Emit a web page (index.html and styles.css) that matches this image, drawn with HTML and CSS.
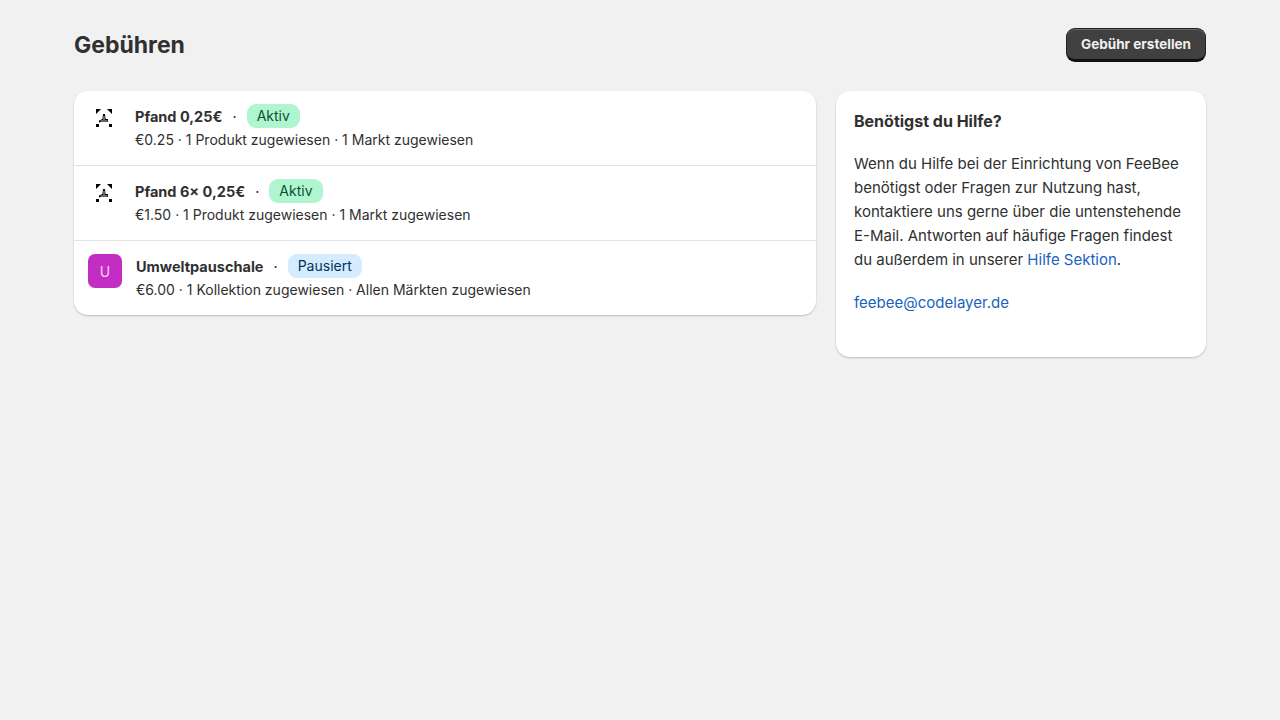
FILE: index.html
```html
<!DOCTYPE html>
<html lang="de">

<head>
  <meta charset="UTF-8" />
  <title>Gebühren</title>
  <link rel="stylesheet" href="styles.css">
</head>

<body>
  <div class="page">
    <header class="page-header">
      <h1>Gebühren</h1>
      <button class="create-btn">Gebühr erstellen</button>
    </header>

    <div class="columns">
      <ul class="card fee-list">
        <li class="fee-row">
          <svg class="fee-icon" viewBox="0 0 20 20">
            <path d="M2 1h5L2 6zM18 1h-5l5 5z" />
            <path d="M9 6h2l.6 5H14v3H7l-2 .6v-2L8.4 11z" />
            <path class="cut" d="M6.500 13h7M10 8v4" />
            <rect x="2" y="16" width="3" height="3" />
            <rect x="15" y="16" width="3" height="3" />
          </svg>
          <div class="fee-text">
            <div class="fee-title">
              <strong>Pfand 0,25€</strong><span class="dot">·</span><span class="badge active">Aktiv</span>
            </div>
            <p>€0.25 · 1 Produkt zugewiesen · 1 Markt zugewiesen</p>
          </div>
        </li>
        <li class="fee-row">
          <svg class="fee-icon" viewBox="0 0 20 20">
            <path d="M2 1h5L2 6zM18 1h-5l5 5z" />
            <path d="M9 6h2l.6 5H14v3H7l-2 .6v-2L8.4 11z" />
            <path class="cut" d="M6.500 13h7M10 8v4" />
            <rect x="2" y="16" width="3" height="3" />
            <rect x="15" y="16" width="3" height="3" />
          </svg>
          <div class="fee-text">
            <div class="fee-title">
              <strong>Pfand 6x 0,25€</strong><span class="dot">·</span><span class="badge active">Aktiv</span>
            </div>
            <p>€1.50 · 1 Produkt zugewiesen · 1 Markt zugewiesen</p>
          </div>
        </li>
        <li class="fee-row">
          <div class="fee-avatar">U</div>
          <div class="fee-text">
            <div class="fee-title">
              <strong>Umweltpauschale</strong><span class="dot">·</span><span class="badge paused">Pausiert</span>
            </div>
            <p>€6.00 · 1 Kollektion zugewiesen · Allen Märkten zugewiesen</p>
          </div>
        </li>
      </ul>

      <aside class="card help">
        <h2>Benötigst du Hilfe?</h2>
        <p>Wenn du Hilfe bei der Einrichtung von FeeBee benötigst oder Fragen zur Nutzung hast, kontaktiere uns gerne über die untenstehende E-Mail. Antworten auf häufige Fragen findest du außerdem in unserer <a href="#">Hilfe Sektion</a>.</p>
        <p><a href="#">feebee@codelayer.de</a></p>
      </aside>
    </div>
  </div>
</body>

</html>
```
FILE: styles.css
```css
* {
  margin: 0;
  padding: 0;
  box-sizing: border-box;
}

body {
  font-family: Inter, "Liberation Sans", sans-serif;
  font-size: 14.5px;
  color: #303030;
  background-color: #f1f1f1;
  min-height: 100vh;
}

.page {
  width: 1132px;
  margin: 0 auto;
  padding-top: 28px;
}

.page-header {
  display: flex;
  justify-content: space-between;
  align-items: center;
  height: 34px;
  margin-bottom: 29px;
}

h1 {
  font-size: 23px;
  font-weight: 700;
  line-height: 34px;
}

.create-btn {
  font-family: inherit;
  font-size: 13.5px;
  font-weight: 650;
  color: #f0f0f0;
  height: 34px;
  padding: 0 14px;
  border: 1px solid #222;
  border-bottom: 3px solid #111;
  border-radius: 9px;
  background-color: #404040;
  box-shadow: inset 0 1px 0 #6a6a6a;
}

.columns {
  display: flex;
  align-items: flex-start;
  gap: 20px;
}

.card {
  background-color: #fff;
  border-radius: 14px;
  box-shadow: 0 1px 2px rgba(0, 0, 0, 0.22);
}

.fee-list {
  width: 742px;
  list-style: none;
  overflow: hidden;
}

.fee-row {
  display: flex;
  align-items: flex-start;
  height: 75px;
  padding: 13px 14px 0;
  border-top: 1px solid #e3e3e3;
}

.fee-row:first-child {
  height: 74px;
  border-top: 0;
}

.fee-icon {
  flex: none;
  width: 20px;
  height: 20px;
  margin: 4px 7px 0 6px;
  fill: #000;
}

.fee-icon .cut {
  fill: none;
  stroke: #fff;
  stroke-width: 0.8;
}

.fee-avatar {
  flex: none;
  display: flex;
  justify-content: center;
  align-items: center;
  width: 34px;
  height: 34px;
  border-radius: 7px;
  font-size: 14px;
  color: #f4d4f2;
  background-color: #c42dc4;
}

.fee-text {
  margin-left: 14px;
}

.fee-title {
  display: flex;
  align-items: center;
  height: 24px;
}

.fee-title strong {
  font-size: 14.5px;
  font-weight: 650;
}

.dot {
  margin: 0 10px;
}

.badge {
  font-size: 14px;
  line-height: 24px;
  padding: 0 10px;
  border-radius: 9px;
}

.active {
  color: #0c5132;
  background-color: #aff5d0;
}

.paused {
  color: #00345c;
  background-color: #d5ebff;
}

.fee-text p {
  font-size: 14px;
  line-height: 24px;
}

.help {
  width: 370px;
  height: 266px;
  padding: 18px;
}

.help h2 {
  font-size: 16px;
  font-weight: 650;
  line-height: 24px;
  margin-bottom: 19px;
}

.help p {
  font-size: 15px;
  line-height: 24px;
  margin-bottom: 19px;
}

a {
  color: #1a62c0;
  text-decoration: none;
}
```
